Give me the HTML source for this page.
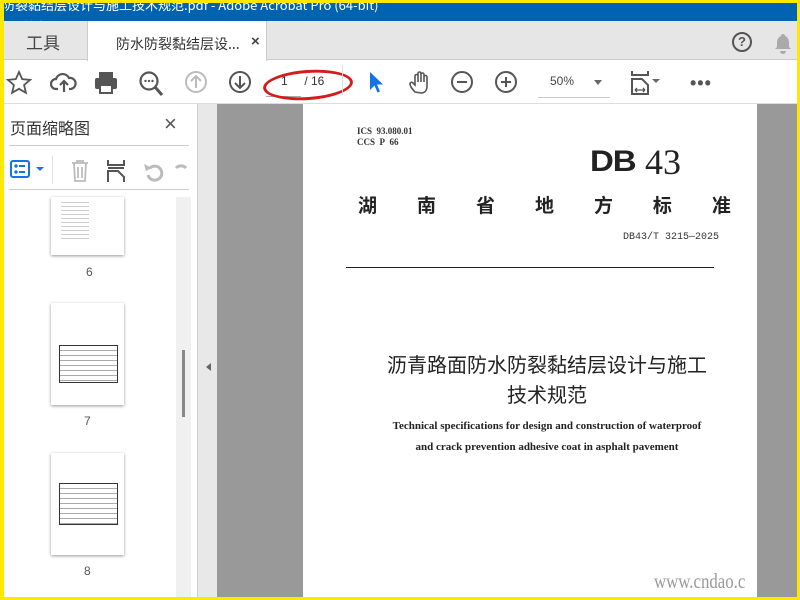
<!DOCTYPE html><html><head><meta charset="utf-8"><style>
*{margin:0;padding:0;box-sizing:border-box}
body{width:800px;height:600px;overflow:hidden;background:#ffe800;position:relative;font-family:"Liberation Sans","Noto Sans CJK SC",sans-serif}
.a{position:absolute}
.cj{font-family:"Noto Sans CJK SC","WenQuanYi Zen Hei",sans-serif}
.sf{font-family:"Liberation Serif","Noto Serif CJK SC",serif}
.ic{position:absolute;top:67px}
</style></head><body>
<div class="a" style="left:4px;top:3px;width:793px;height:594px;background:#fff;overflow:hidden">
<div class="a" style="left:0;top:0;width:793px;height:18px;background:#0063b1;color:#fff;font-size:13px;white-space:nowrap;overflow:hidden"><span class="cj" style="position:absolute;top:-8px;left:-2px">防裂黏结层设计与施工技术规范.pdf - Adobe Acrobat Pro (64-bit)</span></div>
<div class="a cj" style="left:14px;top:12px;font-size:17px;color:#8aa;letter-spacing:2px;opacity:.7">道桥网</div>
<div class="a" style="left:0;top:18px;width:793px;height:39px;background:#e6e6e6;border-bottom:1px solid #ccc"></div>
<div class="a" style="left:83px;top:18px;width:180px;height:40px;background:#fff;border-left:1px solid #ccc;border-right:1px solid #ccc"></div>
<div class="a cj" style="left:22px;top:26px;font-size:17px;color:#444">工具</div>
<div class="a cj" style="left:112px;top:31px;font-size:14px;color:#333">防水防裂黏结层设...</div>
<div class="a" style="left:247px;top:30px;font-size:15px;color:#444;font-weight:bold">×</div>
<div class="a" style="left:728px;top:29px;width:20px;height:20px;border:2px solid #555;border-radius:50%;font-size:13px;font-weight:bold;text-align:center;line-height:16px;color:#555">?</div>
<svg class="a" style="left:770px;top:29px" width="18" height="22"><path d="M9 2a2 2 0 0 1 2 2c3 1 4 4 4 7v4l2 2H1l2-2v-4c0-3 1-6 4-7a2 2 0 0 1 2-2z M6 19h6a3 3 0 0 1-6 0z" fill="#aaa"/></svg>
<div class="a" style="left:0;top:100px;width:793px;height:1px;background:#ddd"></div>
<svg class="ic" style="left:2px" width="26" height="26"><path d="M13 2l3.2 7.2 7.8.7-5.9 5.2 1.8 7.7L13 18.8 6.1 22.8 7.9 15.1 2 9.9l7.8-.7z" fill="none" stroke="#555" stroke-width="1.8"/></svg>
<svg class="ic" style="left:46px" width="28" height="26"><path d="M8 19H6a5 5 0 0 1 0-10 7 7 0 0 1 13-1 5.5 5.5 0 0 1 2 11h-2" fill="none" stroke="#555" stroke-width="2.2"/><path d="M14 22V11M10 15l4-4 4 4" fill="none" stroke="#555" stroke-width="2.2"/></svg>
<svg class="ic" style="left:89px" width="26" height="26"><rect x="6" y="2" width="14" height="6" fill="#555"/><rect x="2" y="8" width="22" height="11" rx="2" fill="#555"/><rect x="7" y="15" width="12" height="8" fill="#fff" stroke="#555" stroke-width="2"/></svg>
<svg class="ic" style="left:134px" width="26" height="28"><circle cx="11" cy="11" r="8.5" fill="none" stroke="#555" stroke-width="2.2"/><path d="M17 17l7 8" stroke="#555" stroke-width="3"/><circle cx="7.5" cy="11" r="1.2" fill="#555"/><circle cx="11" cy="11" r="1.2" fill="#555"/><circle cx="14.5" cy="11" r="1.2" fill="#555"/></svg>
<svg class="ic" style="left:180px" width="24" height="24"><circle cx="12" cy="12" r="10" fill="none" stroke="#bbb" stroke-width="2"/><path d="M12 18V6M7 11l5-5 5 5" fill="none" stroke="#bbb" stroke-width="2"/></svg>
<svg class="ic" style="left:224px" width="24" height="24"><circle cx="12" cy="12" r="10" fill="none" stroke="#555" stroke-width="2"/><path d="M12 6v12M7 13l5 5 5-5" fill="none" stroke="#555" stroke-width="2"/></svg>
<div class="a" style="left:277px;top:71px;font-size:12px;color:#333">1&nbsp;&nbsp;&nbsp;&nbsp;&nbsp;/ 16</div>
<div class="a" style="left:262px;top:93px;width:35px;height:1px;background:#aaa"></div>
<div class="a" style="left:259px;top:67px;width:90px;height:30px;border:3px solid #d41c1c;border-radius:50%;transform:rotate(-4deg)"></div>
<div class="a" style="left:338px;top:62px;width:1px;height:30px;background:#ddd"></div>
<svg class="ic" style="left:364px" width="16" height="24"><path d="M2 2v18l4.5-4.5 3 7 2.5-1-3-7h6z" fill="#1473e6"/></svg>
<svg class="ic" style="left:404px" width="26" height="26"><path d="M7 22c-2-2-5-6-5-8s2-2 3-1l2 2V6a1.5 1.5 0 0 1 3 0v6V3.5a1.5 1.5 0 0 1 3 0V12V4.5a1.5 1.5 0 0 1 3 0V12V7a1.5 1.5 0 0 1 3 0v9c0 4-2 7-6 7z" fill="none" stroke="#555" stroke-width="1.6"/></svg>
<svg class="ic" style="left:446px" width="24" height="24"><circle cx="12" cy="12" r="10" fill="none" stroke="#555" stroke-width="2"/><path d="M7 12h10" stroke="#555" stroke-width="2"/></svg>
<svg class="ic" style="left:490px" width="24" height="24"><circle cx="12" cy="12" r="10" fill="none" stroke="#555" stroke-width="2"/><path d="M7 12h10M12 7v10" stroke="#555" stroke-width="2"/></svg>
<div class="a" style="left:546px;top:71px;font-size:12px;color:#444">50%</div>
<div class="a" style="left:590px;top:77px;border:4px solid transparent;border-top:5px solid #666"></div>
<div class="a" style="left:534px;top:94px;width:72px;height:1px;background:#ccc"></div>
<svg class="ic" style="left:626px" width="36" height="26"><path d="M2 1v4h16V1M2 24V9h10l6 6v9z" fill="none" stroke="#555" stroke-width="2"/><path d="M5 20h10M5 20l2-2M5 20l2 2M15 20l-2-2M15 20l-2 2" stroke="#555" stroke-width="1.3"/><path d="M22 9h8l-4 4z" fill="#666"/></svg>
<div class="a" style="left:686px;top:70px;font-size:18px;color:#555;letter-spacing:1px;font-weight:bold">•••</div>
<div class="a" style="left:193px;top:101px;width:1px;height:493px;background:#ccc"></div>
<div class="a cj" style="left:6px;top:112px;font-size:16px;color:#333">页面缩略图</div>
<div class="a" style="left:160px;top:108px;font-size:22px;color:#555">×</div>
<div class="a" style="left:5px;top:142px;width:180px;height:1px;background:#ccc"></div>
<svg class="a" style="left:6px;top:157px" width="40" height="20"><rect x="1" y="1" width="18" height="16" rx="2" fill="none" stroke="#1473e6" stroke-width="2"/><circle cx="6" cy="6" r="1.7" fill="#1473e6"/><circle cx="6" cy="12" r="1.7" fill="#1473e6"/><path d="M9 6h6M9 12h6" stroke="#1473e6" stroke-width="2"/><path d="M26 7h8l-4 4z" fill="#1473e6"/></svg>
<div class="a" style="left:48px;top:153px;width:1px;height:28px;background:#ddd"></div>
<svg class="a" style="left:66px;top:156px" width="120" height="24"><path d="M2 4h16M7 4V2h6v2M4 4l1 18h10l1-18M8 8v11M12 8v11" fill="none" stroke="#bbb" stroke-width="1.8"/><path d="M38 1v5h16V1M38 23V12h10l6 6v5M38 9h16" fill="none" stroke="#555" stroke-width="2"/><path d="M80 9a7 7 0 1 1-2 7" fill="none" stroke="#bbb" stroke-width="3"/><path d="M74 5l2 7 6-3z" fill="#bbb"/><path d="M116 9a7 7 0 0 0-10 0" fill="none" stroke="#bbb" stroke-width="3"/></svg>
<div class="a" style="left:5px;top:186px;width:180px;height:1px;background:#ccc"></div>
<div class="a" style="left:172px;top:194px;width:15px;height:400px;background:#f0f0f0"></div>
<div class="a" style="left:178px;top:347px;width:3px;height:67px;background:#888"></div>
<div class="a" style="left:47px;top:194px;width:73px;height:58px;background:#fff;box-shadow:0 1px 3px #999;background-image:repeating-linear-gradient(#fff 0 3px,#ccc 3px 4px);background-size:28px 40px;background-repeat:no-repeat;background-position:10px 2px"></div>
<div class="a" style="left:82px;top:262px;font-size:12px;color:#555">6</div>
<div class="a" style="left:47px;top:300px;width:73px;height:102px;background:#fff;box-shadow:0 1px 3px #999"><div class="a" style="left:8px;top:42px;width:59px;height:38px;border:1px solid #333;background:repeating-linear-gradient(#fff 0 4px,#aaa 4px 5px)"></div></div>
<div class="a" style="left:80px;top:411px;font-size:12px;color:#555">7</div>
<div class="a" style="left:47px;top:450px;width:73px;height:102px;background:#fff;box-shadow:0 1px 3px #999"><div class="a" style="left:8px;top:30px;width:59px;height:42px;border:1px solid #333;background:repeating-linear-gradient(#fff 0 4px,#aaa 4px 5px)"></div></div>
<div class="a" style="left:80px;top:561px;font-size:12px;color:#555">8</div>
<div class="a" style="left:194px;top:101px;width:19px;height:493px;background:#e8e8e8"></div>
<div class="a" style="left:198px;top:360px;border:4px solid transparent;border-right:5px solid #666"></div>
<div class="a" style="left:213px;top:101px;width:580px;height:493px;background:#999"></div>
<div class="a" style="left:299px;top:101px;width:454px;height:493px;background:#fff"></div>
<div class="a sf" style="left:353px;top:123px;font-size:9px;font-weight:bold;color:#333;line-height:11px">ICS&nbsp; 93.080.01<br>CCS&nbsp; P&nbsp; 66</div>
<div class="a" style="left:586px;top:146px;font-size:30px;line-height:26px;font-weight:900;color:#222;font-family:'Liberation Sans',sans-serif;transform:scaleX(1.1);transform-origin:left;letter-spacing:-1px">DB</div>
<div class="a sf" style="left:641px;top:141px;font-size:36px;color:#222;line-height:36px">43</div>
<div class="a cj" style="left:354px;top:188px;width:373px;font-size:19px;font-weight:bold;color:#222;display:flex;justify-content:space-between"><span>湖</span><span>南</span><span>省</span><span>地</span><span>方</span><span>标</span><span>准</span></div>
<div class="a" style="left:619px;top:229px;font-size:10px;color:#333;font-family:'Liberation Mono',monospace">DB43/T 3215—2025</div>
<div class="a" style="left:342px;top:264px;width:368px;height:1px;background:#222"></div>
<div class="a cj" style="left:299px;top:346px;width:488px;text-align:center;font-size:20px;color:#222;line-height:30px">沥青路面防水防裂黏结层设计与施工<br>技术规范</div>
<div class="a sf" style="left:299px;top:413px;width:488px;text-align:center;font-size:11px;font-weight:bold;color:#222;line-height:21px">Technical specifications for design and construction of waterproof<br>and crack prevention adhesive coat in asphalt pavement</div>
<div class="a" style="left:650px;top:566px;font-size:21px;color:#999;font-family:'Liberation Serif',serif;transform:scaleX(.8);transform-origin:left">www.cndao.c</div>
</div>
</body></html>
